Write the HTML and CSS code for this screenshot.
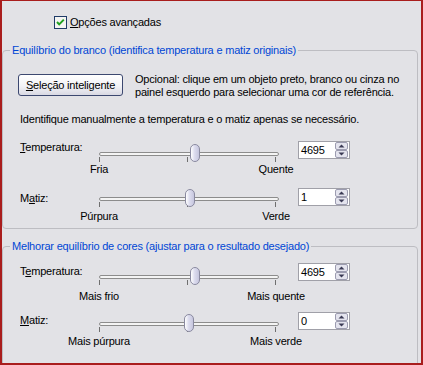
FILE: index.html
```html
<!DOCTYPE html>
<html>
<head>
<meta charset="utf-8">
<link rel="stylesheet" href="styles.css">
</head>
<body>
<div class="window">
    <div class="advanced">
        <svg class="check" width="13" height="13" viewBox="0 0 13 13">
            <rect x="0.5" y="0.5" width="12" height="12" fill="#f4f4f2" stroke="#1f3b68"/>
            <polyline points="3,6 5.2,8.4 9.8,3.6" fill="none" stroke="#21a121" stroke-width="2"/>
        </svg>
        <span><u>O</u>pções avançadas</span>
    </div>

    <fieldset class="group">
        <legend>Equilíbrio do branco (identifica temperatura e matiz originais)</legend>
        <div class="picker">
            <button class="button"><u>S</u>eleção inteligente</button>
            <p class="hint">Opcional: clique em um objeto preto, branco ou cinza no<br>painel esquerdo para selecionar uma cor de referência.</p>
        </div>
        <p class="note">Identifique manualmente a temperatura e o matiz apenas se necessário.</p>

        <div class="srow r1">
            <span class="lbl"><u>T</u>emperatura:</span>
            <div class="slider">
                <div class="rail">
                    <span class="track"></span>
                    <span class="tick t0"></span><span class="tick t1"></span><span class="tick t2"></span>
                    <span class="thumb" style="left: 97px"></span>
                </div>
                <div class="scale"><span>Fria</span><span>Quente</span></div>
            </div>
            <div class="spin"><span>4695</span>
                <svg class="arrows" width="13" height="16" viewBox="0 0 13 16">
                    <rect x="0.5" y="0.5" width="12" height="7" rx="1.5" fill="#e4e4ee" stroke="#9c9cb0"/>
                    <rect x="0.5" y="8.5" width="12" height="7" rx="1.5" fill="#e4e4ee" stroke="#9c9cb0"/>
                    <polygon points="3.5,5.5 6.5,2.5 9.5,5.5" fill="#3a3a55"/>
                    <polygon points="3.5,10.5 6.5,13.5 9.5,10.5" fill="#3a3a55"/>
                </svg>
            </div>
        </div>

        <div class="srow r2">
            <span class="lbl">M<u>a</u>tiz:</span>
            <div class="slider">
                <div class="rail">
                    <span class="track"></span>
                    <span class="tick t0"></span><span class="tick t1"></span><span class="tick t2"></span>
                    <span class="thumb" style="left: 92px"></span>
                </div>
                <div class="scale"><span>Púrpura</span><span>Verde</span></div>
            </div>
            <div class="spin"><span>1</span>
                <svg class="arrows" width="13" height="16" viewBox="0 0 13 16">
                    <rect x="0.5" y="0.5" width="12" height="7" rx="1.5" fill="#e4e4ee" stroke="#9c9cb0"/>
                    <rect x="0.5" y="8.5" width="12" height="7" rx="1.5" fill="#e4e4ee" stroke="#9c9cb0"/>
                    <polygon points="3.5,5.5 6.5,2.5 9.5,5.5" fill="#3a3a55"/>
                    <polygon points="3.5,10.5 6.5,13.5 9.5,10.5" fill="#3a3a55"/>
                </svg>
            </div>
        </div>
    </fieldset>

    <fieldset class="group second">
        <legend>Melhorar equilíbrio de cores (ajustar para o resultado desejado)</legend>

        <div class="srow r3">
            <span class="lbl">T<u>e</u>mperatura:</span>
            <div class="slider">
                <div class="rail">
                    <span class="track"></span>
                    <span class="tick t0"></span><span class="tick t1"></span><span class="tick t2"></span>
                    <span class="thumb" style="left: 97px"></span>
                </div>
                <div class="scale"><span>Mais frio</span><span>Mais quente</span></div>
            </div>
            <div class="spin"><span>4695</span>
                <svg class="arrows" width="13" height="16" viewBox="0 0 13 16">
                    <rect x="0.5" y="0.5" width="12" height="7" rx="1.5" fill="#e4e4ee" stroke="#9c9cb0"/>
                    <rect x="0.5" y="8.5" width="12" height="7" rx="1.5" fill="#e4e4ee" stroke="#9c9cb0"/>
                    <polygon points="3.5,5.5 6.5,2.5 9.5,5.5" fill="#3a3a55"/>
                    <polygon points="3.5,10.5 6.5,13.5 9.5,10.5" fill="#3a3a55"/>
                </svg>
            </div>
        </div>

        <div class="srow r4">
            <span class="lbl"><u>M</u>atiz:</span>
            <div class="slider">
                <div class="rail">
                    <span class="track"></span>
                    <span class="tick t0"></span><span class="tick t1"></span><span class="tick t2"></span>
                    <span class="thumb" style="left: 91px"></span>
                </div>
                <div class="scale"><span>Mais púrpura</span><span>Mais verde</span></div>
            </div>
            <div class="spin"><span>0</span>
                <svg class="arrows" width="13" height="16" viewBox="0 0 13 16">
                    <rect x="0.5" y="0.5" width="12" height="7" rx="1.5" fill="#e4e4ee" stroke="#9c9cb0"/>
                    <rect x="0.5" y="8.5" width="12" height="7" rx="1.5" fill="#e4e4ee" stroke="#9c9cb0"/>
                    <polygon points="3.5,5.5 6.5,2.5 9.5,5.5" fill="#3a3a55"/>
                    <polygon points="3.5,10.5 6.5,13.5 9.5,10.5" fill="#3a3a55"/>
                </svg>
            </div>
        </div>
    </fieldset>
</div>
</body>
</html>
```

FILE: styles.css
```css
body {
    margin: 0;
    font: 11px/13px "Liberation Sans", Arial, sans-serif;
    letter-spacing: -0.2px;
    color: #000;
}
.window {
    width: 423px;
    height: 365px;
    box-sizing: border-box;
    border: solid #a91d1d;
    border-width: 1px 2px 2px 2px;
    background: #e2e2e6;
    overflow: hidden;
}
.advanced {
    display: flex;
    align-items: center;
    gap: 3px;
    height: 13px;
    margin: 15px 0 0 52px;
}
.check {
    display: block;
}

/* group boxes */
.group {
    margin: 15px 3px 0 0;
    padding: 16px 0 5px 0;
    border: 1px solid #bdbdc2;
    border-radius: 4px;
    min-width: 0;
}
.group.second {
    margin-top: 11px;
    padding-top: 10px;
    padding-bottom: 30px;
}
.group legend {
    margin-left: 7px;
    padding: 0 2px;
    color: #0046d5;
    line-height: 13px;
}

.picker {
    display: flex;
    margin-left: 15px;
}
.button {
    width: 105px;
    height: 22px;
    margin-top: 1px;
    padding: 0;
    border: 1px solid #3c4870;
    border-radius: 3px;
    background: linear-gradient(#ffffff, #f2f2f6 55%, #d9d9e3);
    font: inherit;
    letter-spacing: inherit;
    color: #000;
}
.hint {
    margin: 0 0 0 12px;
}
.note {
    margin: 14px 0 0 17px;
}

/* slider rows */
.srow {
    display: flex;
    align-items: flex-start;
    margin-left: 17px;
}
.lbl {
    width: 73px;
}
.slider {
    width: 191px;
}
.rail {
    position: relative;
    height: 18px;
    margin-top: 4px;
}
.track {
    position: absolute;
    left: 6px;
    top: 8px;
    width: 180px;
    height: 4px;
    box-sizing: border-box;
    border: 1px solid #8c8c8c;
    border-radius: 2px;
    background: #f4f4f4;
}
.tick {
    position: absolute;
    top: 13px;
    width: 1px;
    height: 5px;
    background: #6f6f6f;
}
.t0 { left: 6px; }
.t1 { left: 94px; }
.t2 { left: 182px; }
.thumb {
    position: absolute;
    top: 0;
    width: 10px;
    height: 18px;
    box-sizing: border-box;
    border: 1px solid #8a8aa0;
    border-radius: 5px;
    background: linear-gradient(to right, #ffffff, #dcdcee 45%, #c6c6de);
}
.scale {
    display: flex;
    justify-content: space-between;
    width: 241px;
    margin-left: -26px;
}
.scale span {
    width: 64px;
    text-align: center;
    white-space: nowrap;
}
.spin {
    display: flex;
    justify-content: space-between;
    align-items: center;
    width: 52px;
    height: 18px;
    box-sizing: border-box;
    margin-left: 14px;
    padding: 0 1px 0 2px;
    border: 1px solid #a0a0a8;
    background: #fff;
}
.arrows {
    display: block;
}

.r1 { margin-top: 14px; }
.r1 .lbl { padding-top: 1px; }
.r1 .spin { margin-top: 1px; }
.r1 .scale { margin-top: 1px; }

.r2 { margin-top: 9px; }
.r2 .lbl { padding-top: 7px; }
.r2 .spin { margin-top: 3px; }
.r2 .scale { margin-top: 3px; }

.r3 .lbl { padding-top: 2px; }
.r3 .scale { margin-top: 5px; }

.r4 { margin-top: 7px; }
.r4 .lbl { padding-top: 4px; }
.r4 .spin { margin-top: 2px; }
.r4 .scale { margin-top: 3px; }
```
